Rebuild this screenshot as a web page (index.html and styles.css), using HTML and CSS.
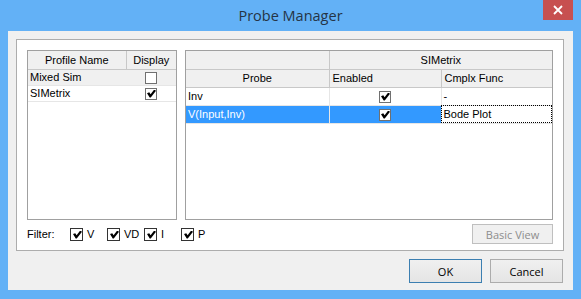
FILE: index.html
```html
<!DOCTYPE html>
<html lang="en">
<head>
  <meta charset="UTF-8" />
  <title>Probe Manager</title>
  <link rel="stylesheet" href="styles.css">
</head>
<body>
  <div id="window">
    <div id="titlebar">
      <span id="title">Probe Manager</span>
      <div id="close-btn">
        <svg viewBox="0 0 10 10" width="10" height="10" aria-hidden="true">
          <path d="M1 1 L9 9 M9 1 L1 9" stroke="#fff" stroke-width="1.8"></path>
        </svg>
      </div>
    </div>

    <div id="client">
      <div id="group">
        <div class="panels">
          <!-- profiles -->
          <div class="grid-box profiles">
            <table class="grid">
              <tr class="head">
                <th class="c-name">Profile Name</th>
                <th class="c-display">Display</th>
              </tr>
              <tr class="row alt">
                <td>Mixed Sim</td>
                <td class="center"><span class="cb small"></span></td>
              </tr>
              <tr class="row">
                <td>SIMetrix</td>
                <td class="center"><span class="cb small checked"></span></td>
              </tr>
            </table>
          </div>

          <!-- probes -->
          <div class="grid-box probes">
            <table class="grid">
              <tr class="head">
                <th class="c-probe"></th>
                <th colspan="2">SIMetrix</th>
              </tr>
              <tr class="head">
                <th>Probe</th>
                <th class="left c-enabled">Enabled</th>
                <th class="left">Cmplx Func</th>
              </tr>
              <tr class="row tall">
                <td>Inv</td>
                <td class="center"><span class="cb small checked"></span></td>
                <td>-</td>
              </tr>
              <tr class="row tall selected">
                <td>V(Input,Inv)</td>
                <td class="center"><span class="cb small checked"></span></td>
                <td class="focus">Bode Plot</td>
              </tr>
            </table>
          </div>
        </div>

        <div class="filter-row">
          <span class="filter-label">Filter:</span>
          <label class="filter"><span class="cb checked"></span>V</label>
          <label class="filter"><span class="cb checked"></span>VD</label>
          <label class="filter"><span class="cb checked"></span>I</label>
          <label class="filter"><span class="cb checked"></span>P</label>
          <button class="btn disabled">Basic View</button>
        </div>
      </div>

      <div class="buttons">
        <button class="btn default">OK</button>
        <button class="btn">Cancel</button>
      </div>
    </div>
  </div>
</body>
</html>
```

FILE: styles.css
```css
* { box-sizing: border-box; }
body {
  margin: 0;
  background: #63b1f6;
  font-family: "Liberation Sans", Arial, sans-serif;
  font-size: 11px;
  color: #000;
}

#window {
  width: 581px;
  height: 299px;
  background: #63b1f6;
  display: flex;
  flex-direction: column;
}

#titlebar {
  position: relative;
  height: 31px;
  display: flex;
  align-items: center;
  justify-content: center;
}
#title {
  font-family: "Open Sans", "Noto Sans", sans-serif;
  font-size: 14.5px;
  color: #253445;
  margin-top: -1px;
}
#close-btn {
  position: absolute;
  top: 0;
  left: 543px;
  width: 30px;
  height: 20px;
  background: #c75050;
  display: flex;
  align-items: center;
  justify-content: center;
}

#client {
  margin: 0 8px 9px 8px;
  height: 259px;
  background: #f0f0f0;
  padding: 8px 9px 0 8px;
}

#group {
  height: 212px;
  background: #fff;
  border: 1px solid #adadad;
  padding: 10px 10px 0 10px;
}

.panels {
  display: flex;
  gap: 8px;
  height: 170px;
}

.grid-box {
  border: 1px solid #a0a0a0;
  background: #fff;
  height: 170px;
}
.profiles { width: 150px; }
.probes { width: 368px; }

.grid {
  border-collapse: collapse;
  width: 100%;
}
.grid th {
  background: #f0f0f0;
  font-weight: normal;
  height: 18px;
  padding: 0 3px;
  border-right: 1px solid #c8c8c8;
  border-bottom: 1px solid #c8c8c8;
  text-align: center;
  white-space: nowrap;
}
.grid th:last-child { border-right: none; }
.grid th.left { text-align: left; }
.grid td {
  height: 16px;
  padding: 0 2px;
  border-bottom: 1px solid #e6e6e6;
  white-space: nowrap;
}
.grid tr.tall td { height: 18px; }
.probes .grid td { border-right: 1px solid #e6e6e6; }
.probes .grid td:last-child { border-right: none; }
.grid td.center { text-align: center; }
.c-name { width: 98px; }
.c-probe { width: 143px; }
.c-enabled { width: 112px; }

.grid tr.alt td { background: #f0f0f0; }
.grid tr.selected td {
  background: #3399ff;
  color: #fff;
}
.grid tr.selected td.focus {
  background: #fff;
  color: #000;
  outline: 1px dotted #000;
  outline-offset: -1px;
}

/* checkboxes */
.cb {
  display: inline-block;
  width: 13px;
  height: 13px;
  border: 1px solid #333;
  background: #fff;
  vertical-align: middle;
  position: relative;
}
.cb.small {
  width: 12px;
  height: 12px;
  border-color: #707070;
}
.cb.checked::after {
  content: "";
  position: absolute;
  left: 2px;
  top: 2px;
  width: 9px;
  height: 8px;
  background: #000;
  clip-path: polygon(0 45%, 25% 35%, 40% 60%, 80% 0, 100% 15%, 42% 100%, 30% 100%);
}
.cb.small.checked::after {
  left: 1px;
  top: 1px;
}

.filter-row {
  display: flex;
  align-items: center;
  height: 20px;
  margin-top: 4px;
}
.filter-label {
  width: 43px;
}
.filter {
  display: flex;
  align-items: center;
  gap: 3px;
  width: 37px;
}
.filter .cb { margin-right: 1px; }

.btn {
  font-family: "Open Sans", "Noto Sans", sans-serif;
  font-size: 11px;
  color: #000;
  background: linear-gradient(#f0f0f0, #e5e5e5);
  border: 1px solid #acacac;
  padding: 0;
  height: 24px;
  width: 73px;
}
.btn.disabled {
  margin-left: auto;
  width: 81px;
  height: 20px;
  color: #8d8d8d;
  background: #f0f0f0;
  border-color: #bfbfbf;
}
.btn.default {
  border-color: #3c7fb1;
}

.buttons {
  display: flex;
  justify-content: flex-end;
  gap: 8px;
  margin-top: 8px;
  padding-right: 1px;
}
```
